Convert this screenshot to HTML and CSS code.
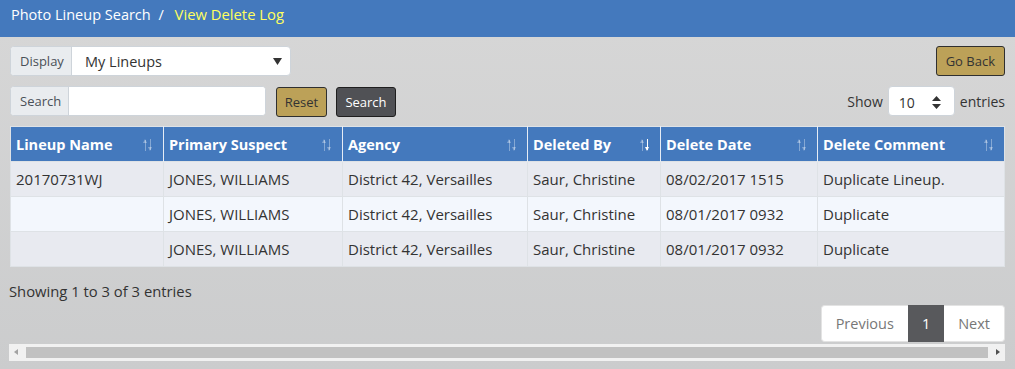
FILE: index.html
```html
<!DOCTYPE html>
<html lang="en">

<head>
    <meta charset="UTF-8">
    <meta name="viewport" content="width=device-width, initial-scale=1.0">
    <title>View Delete Log</title>
    <link rel="stylesheet" href="styles.css">
</head>

<body>
    <div class="topbar">
        <span class="crumb">Photo Lineup Search</span>
        <span class="sep">/</span>
        <span class="crumb current">View Delete Log</span>
    </div>

    <div class="content">
        <div class="row">
            <div class="input-group display-group">
                <span class="addon">Display</span>
                <div class="select">
                    <span>My Lineups</span>
                    <svg width="9" height="7" viewBox="0 0 9 7"><path d="M0 0h9L4.5 7z" fill="#333"/></svg>
                </div>
            </div>
            <button class="btn btn-gold">Go Back</button>
        </div>

        <div class="row">
            <div class="left-tools">
                <div class="input-group search-group">
                    <span class="addon">Search</span>
                    <input type="text" class="field">
                </div>
                <button class="btn btn-gold">Reset</button>
                <button class="btn btn-dark">Search</button>
            </div>
            <div class="length">
                <span>Show</span>
                <div class="len-select">
                    <span>10</span>
                    <svg width="9" height="13" viewBox="0 0 9 13"><path d="M4.5 0L9 5H0z M0 8h9l-4.5 5z" fill="#333"/></svg>
                </div>
                <span>entries</span>
            </div>
        </div>

        <table class="log">
            <thead>
                <tr>
                    <th class="c1">Lineup Name<i class="sort"></i></th>
                    <th class="c2">Primary Suspect<i class="sort"></i></th>
                    <th class="c3">Agency<i class="sort"></i></th>
                    <th class="c4">Deleted By<i class="sort desc"></i></th>
                    <th class="c5">Delete Date<i class="sort"></i></th>
                    <th class="c6">Delete Comment<i class="sort"></i></th>
                </tr>
            </thead>
            <tbody>
                <tr>
                    <td>20170731WJ</td>
                    <td>JONES, WILLIAMS</td>
                    <td>District 42, Versailles</td>
                    <td>Saur, Christine</td>
                    <td>08/02/2017 1515</td>
                    <td>Duplicate Lineup.</td>
                </tr>
                <tr>
                    <td></td>
                    <td>JONES, WILLIAMS</td>
                    <td>District 42, Versailles</td>
                    <td>Saur, Christine</td>
                    <td>08/01/2017 0932</td>
                    <td>Duplicate</td>
                </tr>
                <tr>
                    <td></td>
                    <td>JONES, WILLIAMS</td>
                    <td>District 42, Versailles</td>
                    <td>Saur, Christine</td>
                    <td>08/01/2017 0932</td>
                    <td>Duplicate</td>
                </tr>
            </tbody>
        </table>

        <div class="info">Showing 1 to 3 of 3 entries</div>

        <div class="pager">
            <span class="page">Previous</span>
            <span class="page active">1</span>
            <span class="page">Next</span>
        </div>

        <div class="hscroll">
            <span class="arrow left"></span>
            <div class="thumb"></div>
            <span class="arrow right"></span>
        </div>
    </div>
</body>

</html>
```

FILE: styles.css
```css
body {
    margin: 0;
    font-family: "Open Sans", Arial, sans-serif;
    font-size: 14px;
    color: #333;
    background: linear-gradient(#d7d7d7, #cbcccd);
    min-height: 369px;
}

.topbar {
    height: 37px;
    background-color: #4479bd;
    padding: 4px 11px 0;
    box-sizing: border-box;
    font-size: 14.5px;
    color: #fff;
}

.topbar .sep {
    margin: 0 5px 0 4px;
}

.topbar .current {
    color: #ffff5e;
    font-size: 14.8px;
    margin-left: 2px;
}

.content {
    padding: 9px 10px 0;
}

.row {
    display: flex;
    justify-content: space-between;
    align-items: flex-start;
    height: 30px;
    margin-bottom: 10px;
}

.input-group {
    display: flex;
    height: 30px;
    border: 1px solid #ced4da;
    border-radius: 4px;
    box-sizing: border-box;
    background: #fff;
    overflow: hidden;
}

.addon {
    display: flex;
    align-items: center;
    padding: 0 0 0 9px;
    background-color: #e9ecef;
    border-right: 1px solid #ced4da;
    color: #495057;
    font-size: 13px;
}

.display-group .addon {
    width: 51px;
}

.search-group .addon {
    width: 48px;
}

.display-group {
    width: 281px;
}

.select {
    flex: 1;
    display: flex;
    align-items: center;
    justify-content: space-between;
    padding: 0 8px 0 13px;
    color: #333;
    font-size: 14.5px;
}

.search-group {
    width: 256px;
}

.field {
    flex: 1;
    border: none;
    outline: none;
    min-width: 0;
}

.left-tools {
    display: flex;
    align-items: flex-start;
}

.btn {
    height: 30px;
    padding: 0 9px;
    border-radius: 3px;
    font-family: inherit;
    font-size: 13px;
    box-sizing: border-box;
}

.btn-gold {
    background-color: #bca158;
    border: 1px solid #2f2f2f;
    color: #333;
}

.left-tools .btn-gold {
    margin-left: 10px;
    margin-top: 1px;
    width: 51px;
    padding: 0;
}

.btn-dark {
    margin-left: 9px;
    margin-top: 1px;
    width: 60px;
    padding: 0;
    background-color: #505155;
    border: 1px solid #1e1e1e;
    color: #fff;
}

.length {
    display: flex;
    align-items: center;
    gap: 5px;
}

.len-select {
    width: 67px;
    height: 30px;
    box-sizing: border-box;
    background: #fff;
    border: 1px solid #ced4da;
    border-radius: 4px;
    display: flex;
    align-items: center;
    justify-content: space-between;
    padding: 2px 13px 0 10px;
}

.log {
    width: 100%;
    border-collapse: collapse;
    border: 1px solid #dee2e6;
    margin-top: 1px;
    font-size: 15px;
}

.log th {
    position: relative;
    height: 34px;
    padding: 0 5px;
    background-color: #4479bd;
    color: #fff;
    font-size: 14.5px;
    font-weight: bold;
    text-align: left;
    border-right: 1px solid #e6ecf5;
}

.log th:last-child {
    border-right: none;
}

.log td {
    height: 34px;
    padding: 0 5px;
    border-right: 1px solid #dee2e6;
    border-top: 1px solid #dee2e6;
}

.log tbody tr:nth-child(odd) {
    background-color: #e8eaf0;
}

.log tbody tr:nth-child(even) {
    background-color: #f3f7fd;
}

.c1 { width: 142px; }
.c2 { width: 168px; }
.c3 { width: 174px; }
.c4 { width: 122px; }
.c5 { width: 146px; }

.sort {
    position: absolute;
    right: 10px;
    top: 12px;
    width: 10px;
    height: 12px;
    background:
        linear-gradient(rgba(255, 255, 255, 0.35), rgba(255, 255, 255, 0.35)) 2px 1px / 1px 11px no-repeat,
        linear-gradient(rgba(255, 255, 255, 0.35), rgba(255, 255, 255, 0.35)) 7px 0 / 1px 11px no-repeat;
}

.sort::before,
.sort::after {
    content: "";
    position: absolute;
    width: 0;
    height: 0;
    border-left: 2.5px solid transparent;
    border-right: 2.5px solid transparent;
}

.sort::before {
    left: 0;
    top: 0;
    border-bottom: 4px solid rgba(255, 255, 255, 0.35);
}

.sort::after {
    left: 5px;
    bottom: 0;
    border-top: 4px solid rgba(255, 255, 255, 0.35);
}

.sort.desc {
    background:
        linear-gradient(rgba(255, 255, 255, 0.35), rgba(255, 255, 255, 0.35)) 2px 1px / 1px 11px no-repeat,
        linear-gradient(#fff, #fff) 7px 0 / 1px 11px no-repeat;
}

.sort.desc::after {
    border-top-color: #fff;
}

.info {
    margin-top: 14px;
    margin-left: -1px;
    font-size: 14.8px;
}

.pager {
    display: flex;
    justify-content: flex-end;
    margin-top: 4px;
}

.page {
    display: flex;
    align-items: center;
    height: 37px;
    box-sizing: border-box;
    padding: 0 14px;
    background: #fff;
    border: 1px solid #e3e3e3;
    color: #777;
    font-size: 14.5px;
}

.page:first-child {
    border-radius: 4px 0 0 4px;
    border-right: none;
}

.page:last-child {
    border-radius: 0 4px 4px 0;
    border-left: none;
}

.page.active {
    background-color: #58595c;
    border-color: #58595c;
    color: #fff;
    padding: 0 13px;
}

.hscroll {
    display: flex;
    align-items: center;
    height: 17px;
    margin: 2px 0 0 -1px;
    background-color: #f1f1f1;
}

.thumb {
    flex: 1;
    height: 11px;
    margin: 0 2px;
    background-color: #c1c1c1;
}

.arrow {
    width: 15px;
    height: 17px;
    position: relative;
}

.arrow::before {
    content: "";
    position: absolute;
    top: 5px;
    border-top: 3.5px solid transparent;
    border-bottom: 3.5px solid transparent;
}

.arrow.left::before {
    left: 5px;
    border-right: 4px solid #a3a3a3;
}

.arrow.right::before {
    right: 5px;
    border-left: 4px solid #505050;
}
```
